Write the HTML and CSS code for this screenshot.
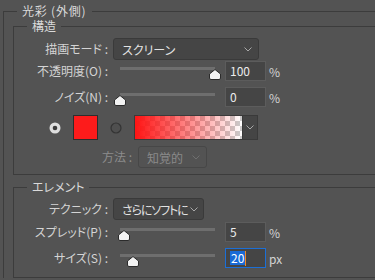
FILE: index.html
```html
<!DOCTYPE html>
<html lang="ja">
<head>
<meta charset="utf-8">
<link rel="stylesheet" href="styles.css">
</head>
<body>
<fieldset class="group outer">
  <legend>光彩 (外側)</legend>

  <fieldset class="group structure">
    <legend>構造</legend>

    <div class="row row-mode">
      <span class="lbl">描画モード :</span>
      <div class="select select-mode">
        <span class="sel-text">スクリーン</span>
        <svg class="chev" width="8" height="5" viewBox="0 0 8 5"><polyline points="0.5,0.5 4,4 7.5,0.5" fill="none" stroke="#a8a8a8" stroke-width="1"/></svg>
      </div>
    </div>

    <div class="row row-opacity">
      <span class="lbl">不透明度(O) :</span>
      <div class="slider">
        <div class="track">
          <svg class="thumb" style="left:100%" width="12" height="11" viewBox="0 0 12 11"><path d="M6 0.5 L11.5 5 V9 Q11.5 10.5 10 10.5 H2 Q0.5 10.5 0.5 9 V5 Z" fill="#f2f2f2" stroke="#2b2b2b" stroke-width="1"/></svg>
        </div>
      </div>
      <div class="num">100</div>
      <span class="unit">%</span>
    </div>

    <div class="row row-noise">
      <span class="lbl">ノイズ(N) :</span>
      <div class="slider">
        <div class="track">
          <svg class="thumb" style="left:0%" width="12" height="11" viewBox="0 0 12 11"><path d="M6 0.5 L11.5 5 V9 Q11.5 10.5 10 10.5 H2 Q0.5 10.5 0.5 9 V5 Z" fill="#f2f2f2" stroke="#2b2b2b" stroke-width="1"/></svg>
        </div>
      </div>
      <div class="num">0</div>
      <span class="unit">%</span>
    </div>

    <div class="row row-color">
      <svg class="radio radio-on" width="12" height="12" viewBox="0 0 12 12"><circle cx="6" cy="6" r="5.5" fill="#dedede"/><circle cx="6" cy="6" r="2.3" fill="#3a3a3a"/></svg>
      <div class="swatch"></div>
      <svg class="radio radio-off" width="12" height="12" viewBox="0 0 12 12"><circle cx="6" cy="6" r="5" fill="#4f4f4f" stroke="#343434" stroke-width="1.2"/></svg>
      <div class="gradient"></div>
      <div class="grad-btn">
        <svg class="chev" width="8" height="5" viewBox="0 0 8 5"><polyline points="0.5,0.5 4,4 7.5,0.5" fill="none" stroke="#a8a8a8" stroke-width="1"/></svg>
      </div>
    </div>

    <div class="row row-method">
      <span class="lbl lbl-dim">方法 :</span>
      <div class="select select-method">
        <span class="sel-text">知覚的</span>
        <svg class="chev" width="8" height="5" viewBox="0 0 8 5"><polyline points="0.5,0.5 4,4 7.5,0.5" fill="none" stroke="#6f6f6f" stroke-width="1"/></svg>
      </div>
    </div>
  </fieldset>

  <fieldset class="group elements">
    <legend>エレメント</legend>

    <div class="row row-tech">
      <span class="lbl">テクニック :</span>
      <div class="select select-tech">
        <span class="sel-text">さらにソフトに</span>
        <svg class="chev" width="8" height="5" viewBox="0 0 8 5"><polyline points="0.5,0.5 4,4 7.5,0.5" fill="none" stroke="#a8a8a8" stroke-width="1"/></svg>
      </div>
    </div>

    <div class="row row-spread">
      <span class="lbl">スプレッド(P) :</span>
      <div class="slider">
        <div class="track">
          <svg class="thumb" style="left:4.2%" width="12" height="11" viewBox="0 0 12 11"><path d="M6 0.5 L11.5 5 V9 Q11.5 10.5 10 10.5 H2 Q0.5 10.5 0.5 9 V5 Z" fill="#f2f2f2" stroke="#2b2b2b" stroke-width="1"/></svg>
        </div>
      </div>
      <div class="num">5</div>
      <span class="unit">%</span>
    </div>

    <div class="row row-size">
      <span class="lbl">サイズ(S) :</span>
      <div class="slider">
        <div class="track">
          <svg class="thumb" style="left:13.7%" width="12" height="11" viewBox="0 0 12 11"><path d="M6 0.5 L11.5 5 V9 Q11.5 10.5 10 10.5 H2 Q0.5 10.5 0.5 9 V5 Z" fill="#f2f2f2" stroke="#2b2b2b" stroke-width="1"/></svg>
        </div>
      </div>
      <div class="num num-active"><span class="selected">20</span><span class="caret"></span></div>
      <span class="unit">px</span>
    </div>
  </fieldset>
</fieldset>
</body>
</html>
```

FILE: styles.css
```css
html, body {
  margin: 0;
  padding: 0;
}
body {
  width: 375px;
  height: 280px;
  overflow: hidden;
  background: #535353;
  color: #d4d4d4;
  font-family: "Noto Sans CJK JP", "Noto Sans", sans-serif;
  font-size: 12px;
  font-feature-settings: "palt";
}

.group {
  margin: 0;
  padding: 0;
  border: 1px solid #3c3c3c;
  border-right: none;
  min-width: 0;
}
.group > legend {
  margin-left: 13px;
  padding: 0 5px;
  line-height: 14px;
  height: 14px;
  font-size: 12px;
  color: #dadada;
}

.outer {
  margin: 4px 0 0 3px;
  border-bottom: none;
}
.outer > legend {
  letter-spacing: 0.8px;
  padding-right: 6px;
}
.structure {
  margin: 1px 0 0 9px;
  padding-bottom: 6px;
}
.elements {
  margin: 5px 0 0 9px;
  padding-bottom: 9px;
}

.row {
  display: flex;
  align-items: center;
}
.lbl {
  width: 94px;
  flex: none;
  text-align: right;
  white-space: nowrap;
  line-height: 16px;
}
.lbl-dim {
  color: #8c8c8c;
}

.row-mode { margin-top: 5px; height: 22px; }
.row-opacity { margin-top: 1px; height: 20px; }
.row-noise { margin-top: 6px; height: 20px; }
.row-color { margin-top: 8px; height: 25px; }
.row-method { margin-top: 6px; height: 22px; }
.row-tech { margin-top: 4px; height: 22px; }
.row-spread { margin-top: 2px; height: 20px; }
.row-size { margin-top: 6px; height: 20px; }

.select {
  box-sizing: border-box;
  height: 22px;
  display: flex;
  align-items: center;
  background: #454545;
  border: 1px solid #3a3a3a;
  border-radius: 3px;
  padding: 0 0 0 8px;
  color: #e2e2e2;
  overflow: hidden;
  white-space: nowrap;
}
.select .sel-text {
  flex: 1;
  overflow: hidden;
}
.select .chev {
  flex: none;
  margin: 1px 6px 0 4px;
}
.select-mode {
  margin-left: 5px;
  width: 146px;
}
.select-tech {
  margin-left: 5px;
  width: 91px;
}
.select-tech .sel-text {
  letter-spacing: -1.1px;
  overflow: visible;
}
.select-tech .chev {
  margin-left: 2px;
}
.row-method .lbl {
  width: 118px;
}
.select-method {
  margin-left: 6px;
  width: 69px;
  background: #535353;
  border-color: #474747;
  color: #8a8a8a;
}

.slider {
  box-sizing: border-box;
  width: 107px;
  height: 20px;
  margin-left: 6px;
  padding: 6px 6px 0;
  align-self: flex-start;
  flex: none;
}
.track {
  position: relative;
  height: 3px;
  background: #6e6e6e;
}
.thumb {
  position: absolute;
  top: 2px;
  margin-left: -6px;
}

.num {
  box-sizing: border-box;
  width: 41px;
  height: 20px;
  margin-left: 4px;
  padding-left: 4px;
  background: #454545;
  border: 1px solid #5c5c5c;
  color: #ececec;
  line-height: 18px;
  display: flex;
  align-items: center;
}
.num-active {
  border-color: #1c6fd6;
}
.selected {
  background: #1a6ad6;
  color: #ffffff;
  line-height: 14px;
  padding: 0 1px;
}
.caret {
  display: inline-block;
  width: 1px;
  height: 15px;
  background: #f08a24;
}
.unit {
  margin-left: 3px;
  color: #d4d4d4;
}

.radio-on {
  margin-left: 35px;
}
.swatch {
  box-sizing: border-box;
  width: 25px;
  height: 25px;
  margin-left: 12px;
  background: #fd1b1b;
  border: 1px solid #2d2d2d;
}
.radio-off {
  margin-left: 12px;
}
.gradient {
  box-sizing: border-box;
  width: 109px;
  height: 25px;
  margin-left: 12px;
  border: 1px solid #3a3a3a;
  background:
    linear-gradient(to right, rgba(255, 20, 20, 1), rgba(255, 20, 20, 0)),
    repeating-conic-gradient(#cbcbcb 0 25%, #ffffff 0 50%) 0 0 / 10px 10px;
}
.grad-btn {
  box-sizing: border-box;
  width: 15px;
  height: 25px;
  background: #454545;
  border: 1px solid #3a3a3a;
  border-left: none;
  display: flex;
  align-items: center;
  justify-content: center;
}
```
